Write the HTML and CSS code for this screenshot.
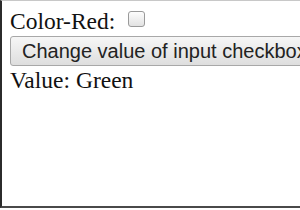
FILE: index.html
```
<!DOCTYPE html>
<html lang="en">

<head>
    <meta charset="UTF-8">
    <meta name="viewport" content="width=device-width, initial-scale=1.0">
    <title>Checkbox value</title>
    <link rel="stylesheet" href="styles.css">
</head>

<body>

    <div class="frame">
        <div class="row">
            <label for="red">Color-Red:</label>
            <input type="checkbox" id="red" class="check" value="Green">
        </div>
        <button class="change" type="button">Change value of input checkbox</button>
        <div class="row" id="output">Value: Green</div>
    </div>

    <script>
        let box = document.querySelector('#red')
        let btn = document.querySelector('.change')
        let out = document.querySelector('#output')

        btn.addEventListener('click', () => {
            box.value = box.value == 'Green' ? 'Red' : 'Green'
            out.textContent = 'Value: ' + box.value
        })
    </script>

</body>

</html>
```

FILE: styles.css
```
* {
    margin: 0;
    padding: 0;
    box-sizing: border-box;
}

html,
body {
    width: 300px;
    height: 210px;
    overflow: hidden;
    background-color: #fff;
}

.frame {
    height: 208px;
    border-left: 2px solid #2b2b2b;
    border-top: 1px solid #c8c8c8;
    border-bottom: 2px solid #4a4a4a;
    padding: 7px 0 0 8px;
    font-family: "Liberation Serif", "Times New Roman", serif;
    font-size: 23.5px;
    color: #111;
    overflow: hidden;
    white-space: nowrap;
}

.row {
    display: flex;
    align-items: center;
    height: 26px;
    line-height: 26px;
}

.check {
    appearance: none;
    -webkit-appearance: none;
    width: 17px;
    height: 16px;
    margin-left: 13px;
    margin-top: -4px;
    border: 1px solid #9a9a9a;
    border-radius: 3px;
    background: linear-gradient(#fdfdfd, #e2e2e2);
}

.change {
    display: block;
    height: 30px;
    margin: 2px 0 1px 0;
    padding: 0 11px;
    font-family: "Liberation Sans", Arial, sans-serif;
    font-size: 20px;
    color: #222;
    border: 1px solid #a8a8a8;
    border-radius: 3px;
    background: linear-gradient(#f6f6f6, #dedede);
    white-space: nowrap;
}
```
